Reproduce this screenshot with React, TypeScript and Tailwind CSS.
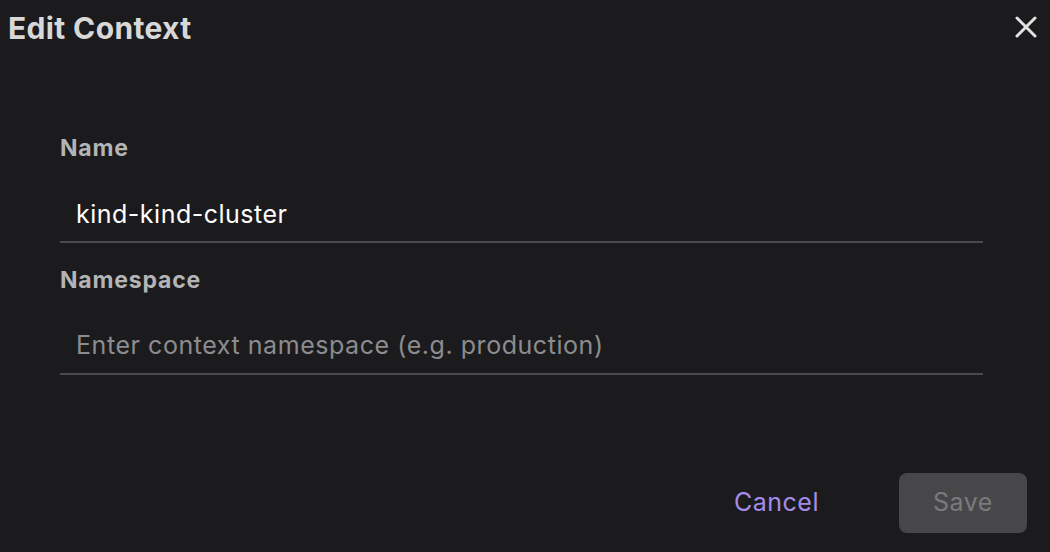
import { X } from 'lucide-react';

export default function App() {
  return (
    <div
      className="w-[1050px] h-[552px] bg-[#1b1b1d] flex flex-col overflow-hidden"
      style={{ fontFamily: 'Inter, "Noto Sans", sans-serif' }}
    >
      {/* header */}
      <div className="flex items-start justify-between pt-[10px] pl-2 pr-[6px]">
        <h1 className="text-[30px] leading-[36px] font-bold tracking-[0.35px] text-[#d8d8d8]">Edit Context</h1>
        <button className="-mt-[1px] text-[#e2e2e2]">
          <X size={36} strokeWidth={2} />
        </button>
      </div>

      {/* form */}
      <div className="flex flex-col pl-[60px] pr-[67px] mt-[88px]">
        <label className="text-[23px] leading-[28px] font-bold tracking-[0.8px] text-[#b4b4b6]">Name</label>
        <input
          readOnly
          value="kind-kind-cluster"
          className="mt-6 h-[57px] px-4 bg-transparent text-[25px] tracking-[0.5px] text-white border-b-2 border-[#4a4a4c] outline-none"
        />
        <label className="mt-[23px] text-[23px] leading-[28px] font-bold tracking-[0.8px] text-[#b4b4b6]">
          Namespace
        </label>
        <input
          readOnly
          placeholder="Enter context namespace (e.g. production)"
          className="mt-[23px] h-[58px] px-4 bg-transparent text-[25px] tracking-[0.55px] text-white placeholder:text-[#8c8c8e] border-b-2 border-[#4a4a4c] outline-none"
        />
      </div>

      {/* footer */}
      <div className="mt-auto flex items-center justify-end gap-16 pr-[23px] pb-[19px]">
        <button className="px-4 text-[25px] tracking-[0.5px] text-[#a78bea]">Cancel</button>
        <button disabled className="w-[128px] h-[60px] rounded-lg bg-[#474749] text-[25px] tracking-[0.5px] text-[#7a7a7c]">
          Save
        </button>
      </div>
    </div>
  );
}
